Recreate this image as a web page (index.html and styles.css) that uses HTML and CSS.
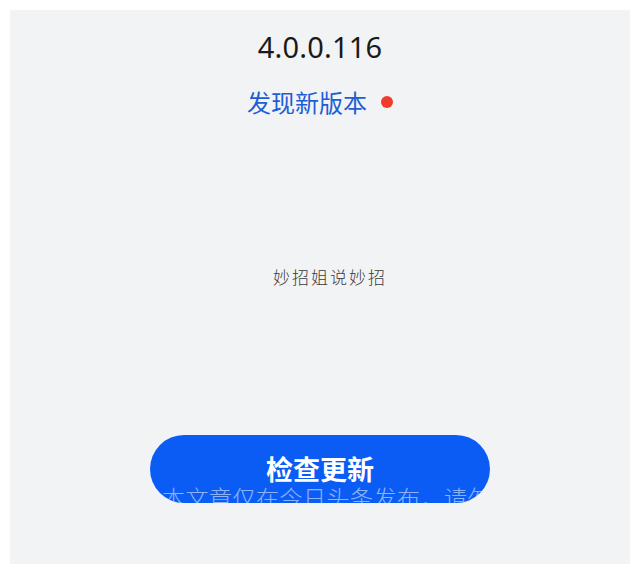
FILE: index.html
```html
<!DOCTYPE html>
<html lang="zh-CN">
<head>
<meta charset="utf-8">
<title>检查更新</title>
<link rel="stylesheet" href="styles.css">
</head>
<body>
<main class="panel">
  <div class="version">4.0.0.116</div>
  <div class="status">
    <span class="status-text">发现新版本</span>
    <span class="dot"></span>
  </div>
  <div class="caption">妙招姐说妙招</div>
  <button class="check-btn" type="button">
    <span class="btn-label">检查更新</span>
    <span class="watermark">本文章仅在今日头条发布，请勿转载</span>
  </button>
</main>
</body>
</html>
```

FILE: styles.css
```css
html, body {
  margin: 0;
  padding: 0;
  background: #ffffff;
}

body {
  padding: 10px;
  font-family: "Noto Sans", "Noto Sans CJK SC", sans-serif;
}

.panel {
  height: 554px;
  background: #f2f3f5;
  display: flex;
  flex-direction: column;
  align-items: center;
  padding-top: 20px;
  box-sizing: border-box;
  overflow: hidden;
}

.version {
  font-family: "Noto Sans", Roboto, sans-serif;
  font-size: 29px;
  line-height: 34px;
  color: #1a1a1a;
  letter-spacing: 0.2px;
}

.status {
  margin-top: 23px;
  display: flex;
  align-items: center;
  gap: 14px;
  height: 30px;
}

.status-text {
  font-family: "Noto Sans CJK SC", sans-serif;
  font-size: 24px;
  line-height: 30px;
  color: #1c5fd4;
}

.dot {
  width: 12px;
  height: 12px;
  border-radius: 50%;
  background: #f03c2c;
}

.caption {
  margin-top: 148px;
  font-family: "Noto Sans CJK SC", sans-serif;
  font-weight: 300;
  font-size: 17px;
  line-height: 24px;
  letter-spacing: 2px;
  color: #3a3a3a;
  padding-left: 20px;
}

.check-btn {
  position: relative;
  overflow: hidden;
  margin-top: 146px;
  width: 340px;
  height: 68px;
  border: none;
  border-radius: 34px;
  background: #0a5cf5;
  color: #ffffff;
  font-family: "Noto Sans CJK SC", sans-serif;
  padding: 0;
  cursor: pointer;
}

.btn-label {
  display: block;
  font-weight: 700;
  font-size: 27px;
  line-height: 68px;
}

.watermark {
  position: absolute;
  left: 12px;
  top: 48px;
  font-family: "Noto Sans CJK SC", sans-serif;
  font-weight: 300;
  font-size: 23px;
  line-height: 28px;
  color: rgba(255, 255, 255, 0.55);
  white-space: nowrap;
  letter-spacing: 0.5px;
}
```
